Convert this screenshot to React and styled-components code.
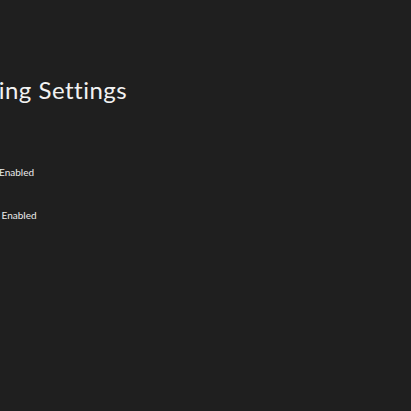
import styled, { createGlobalStyle } from "styled-components";

const Global = createGlobalStyle`
    html, body {
        margin: 0;
        padding: 0;
        background: #1f1f1f;
        overflow: hidden;
    }
    body {
        font-family: Lato, "Open Sans", sans-serif;
        color: #f2f2f2;
    }
`

const Page = styled.div`
    width: 411px;
    height: 411px;
    overflow: hidden;
    background: #1f1f1f;
`

const Panel = styled.section`
    display: flex;
    flex-direction: column;
    margin-left: -78px;
    padding-top: 74px;
`

const Title = styled.h1`
    margin: 0;
    font-size: 24px;
    font-weight: 400;
    line-height: 32px;
    letter-spacing: 0.5px;
    white-space: nowrap;
`

const List = styled.div`
    display: flex;
    flex-direction: column;
    gap: 27px;
    margin-top: 58px;
`

const Row = styled.div`
    display: grid;
    grid-template-columns: ${({ $labelWidth }) => $labelWidth}px auto;
    font-size: 10px;
    line-height: 16px;
    white-space: nowrap;
`

const Label = styled.span`
    color: #ffffff;
`

const Value = styled.span`
    color: #ececec;
`

const settings = [
    { id: 1, label: "Vibration", value: "Enabled", width: 77 },
    { id: 2, label: "Trigger rumble", value: "Enabled", width: 79.5 },
]

const App = () => {
    return (
        <>
        <Global/>
        <Page>
            <Panel>
                <Title>Streaming Settings</Title>
                <List>
                    {settings.map((item) =>
                        <Row key={item.id} $labelWidth={item.width}>
                            <Label>{item.label}</Label>
                            <Value>{item.value}</Value>
                        </Row>
                    )}
                </List>
            </Panel>
        </Page>
        </>
    )
}

export default App;
